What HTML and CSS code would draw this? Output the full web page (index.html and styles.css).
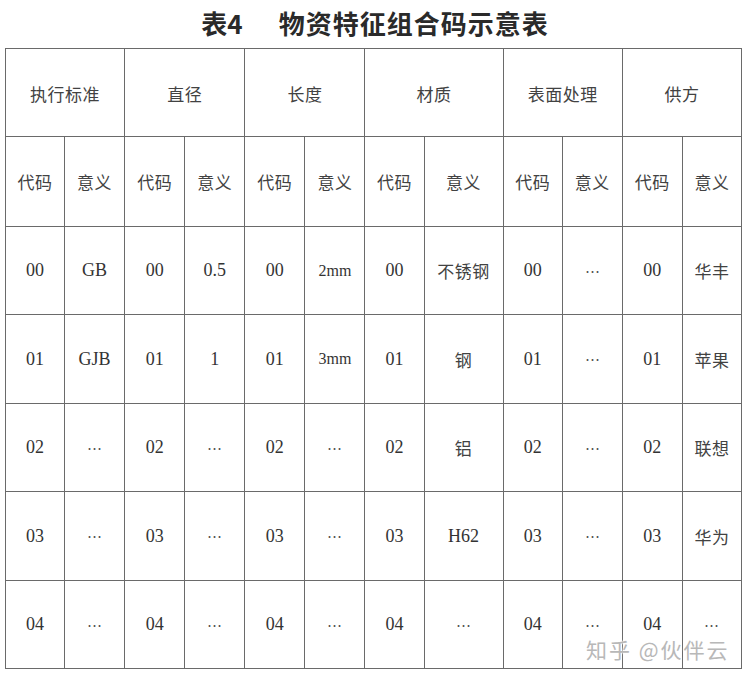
FILE: index.html
```html
<!DOCTYPE html>
<html lang="zh">
<head>
<meta charset="utf-8">
<link rel="stylesheet" href="styles.css">
</head>
<body>
<div class="page">
  <h1 class="title"><span class="tno">表4</span><span class="tname">物资特征组合码示意表</span></h1>
  <table class="grid">
    <colgroup>
      <col class="c59"><col class="c60">
      <col class="c60"><col class="c60">
      <col class="c60"><col class="c60">
      <col class="c59"><col class="c79">
      <col class="c59"><col class="c60">
      <col class="c60"><col class="c59">
    </colgroup>
    <tr class="r88">
      <th colspan="2">执行标准</th><th colspan="2">直径</th><th colspan="2">长度</th>
      <th colspan="2">材质</th><th colspan="2">表面处理</th><th colspan="2">供方</th>
    </tr>
    <tr class="r90">
      <td>代码</td><td>意义</td><td>代码</td><td>意义</td><td>代码</td><td>意义</td>
      <td>代码</td><td>意义</td><td>代码</td><td>意义</td><td>代码</td><td>意义</td>
    </tr>
    <tr class="r88">
      <td class="n">00</td><td class="n">GB</td><td class="n">00</td><td class="n">0.5</td><td class="n">00</td><td class="n sm">2mm</td>
      <td class="n">00</td><td>不锈钢</td><td class="n">00</td><td class="e">⋯</td><td class="n">00</td><td>华丰</td>
    </tr>
    <tr class="r89">
      <td class="n">01</td><td class="n">GJB</td><td class="n">01</td><td class="n">1</td><td class="n">01</td><td class="n sm">3mm</td>
      <td class="n">01</td><td>钢</td><td class="n">01</td><td class="e">⋯</td><td class="n">01</td><td>苹果</td>
    </tr>
    <tr class="r88">
      <td class="n">02</td><td class="e">⋯</td><td class="n">02</td><td class="e">⋯</td><td class="n">02</td><td class="e">⋯</td>
      <td class="n">02</td><td>铝</td><td class="n">02</td><td class="e">⋯</td><td class="n">02</td><td>联想</td>
    </tr>
    <tr class="r89">
      <td class="n">03</td><td class="e">⋯</td><td class="n">03</td><td class="e">⋯</td><td class="n">03</td><td class="e">⋯</td>
      <td class="n">03</td><td class="n">H62</td><td class="n">03</td><td class="e">⋯</td><td class="n">03</td><td>华为</td>
    </tr>
    <tr class="r88">
      <td class="n">04</td><td class="e">⋯</td><td class="n">04</td><td class="e">⋯</td><td class="n">04</td><td class="e">⋯</td>
      <td class="n">04</td><td class="e">⋯</td><td class="n">04</td><td class="e">⋯</td><td class="n">04</td><td class="e">⋯</td>
    </tr>
  </table>
  <div class="watermark">知乎 @伙伴云</div>
</div>
</body>
</html>
```
FILE: styles.css
```css
html, body {
  margin: 0;
  padding: 0;
  background: #ffffff;
}
.page {
  position: relative;
  width: 746px;
  height: 680px;
  overflow: hidden;
}
.title {
  margin: 0;
  height: 48px;
  display: flex;
  justify-content: center;
  align-items: center;
  gap: 36px;
  padding-left: 4px;
  padding-bottom: 3px;
  box-sizing: border-box;
  font-family: "Noto Sans CJK SC", "Noto Sans", sans-serif;
  font-weight: 700;
  font-size: 26px;
  color: #2a2a2a;
}
.tname {
  letter-spacing: 1px;
}
.grid {
  margin-left: 5px;
  border-collapse: collapse;
  table-layout: fixed;
  width: 737px;
  font-family: "Noto Sans CJK SC", sans-serif;
  font-size: 17px;
  color: #424242;
}
.grid th, .grid td {
  border: 1.6px solid #6a6a6a;
  padding: 0;
  text-align: center;
  vertical-align: middle;
  font-weight: 400;
  letter-spacing: 0.5px;
}
.grid th {
  padding-top: 1px;
}
.grid td.n {
  font-family: "Liberation Serif", "Noto Sans CJK SC", serif;
  font-size: 18px;
  color: #333333;
  letter-spacing: 0;
}
.grid td.e {
  font-family: "DejaVu Serif", serif;
  font-size: 15px;
  color: #555555;
  letter-spacing: 0;
}
.grid td.sm {
  font-size: 16px;
}
.c59 { width: 59px; }
.c60 { width: 60px; }
.c79 { width: 79px; }
.r88 { height: 88px; }
.r89 { height: 89px; }
.r90 { height: 90px; }
.watermark {
  position: absolute;
  left: 586px;
  top: 639px;
  line-height: 21px;
  font-family: "Noto Sans CJK SC", sans-serif;
  font-size: 21px;
  color: #b8b8b8;
  letter-spacing: 2px;
  text-shadow: 0 0 2px #ffffff, 0 0 2px #ffffff;
}
```
